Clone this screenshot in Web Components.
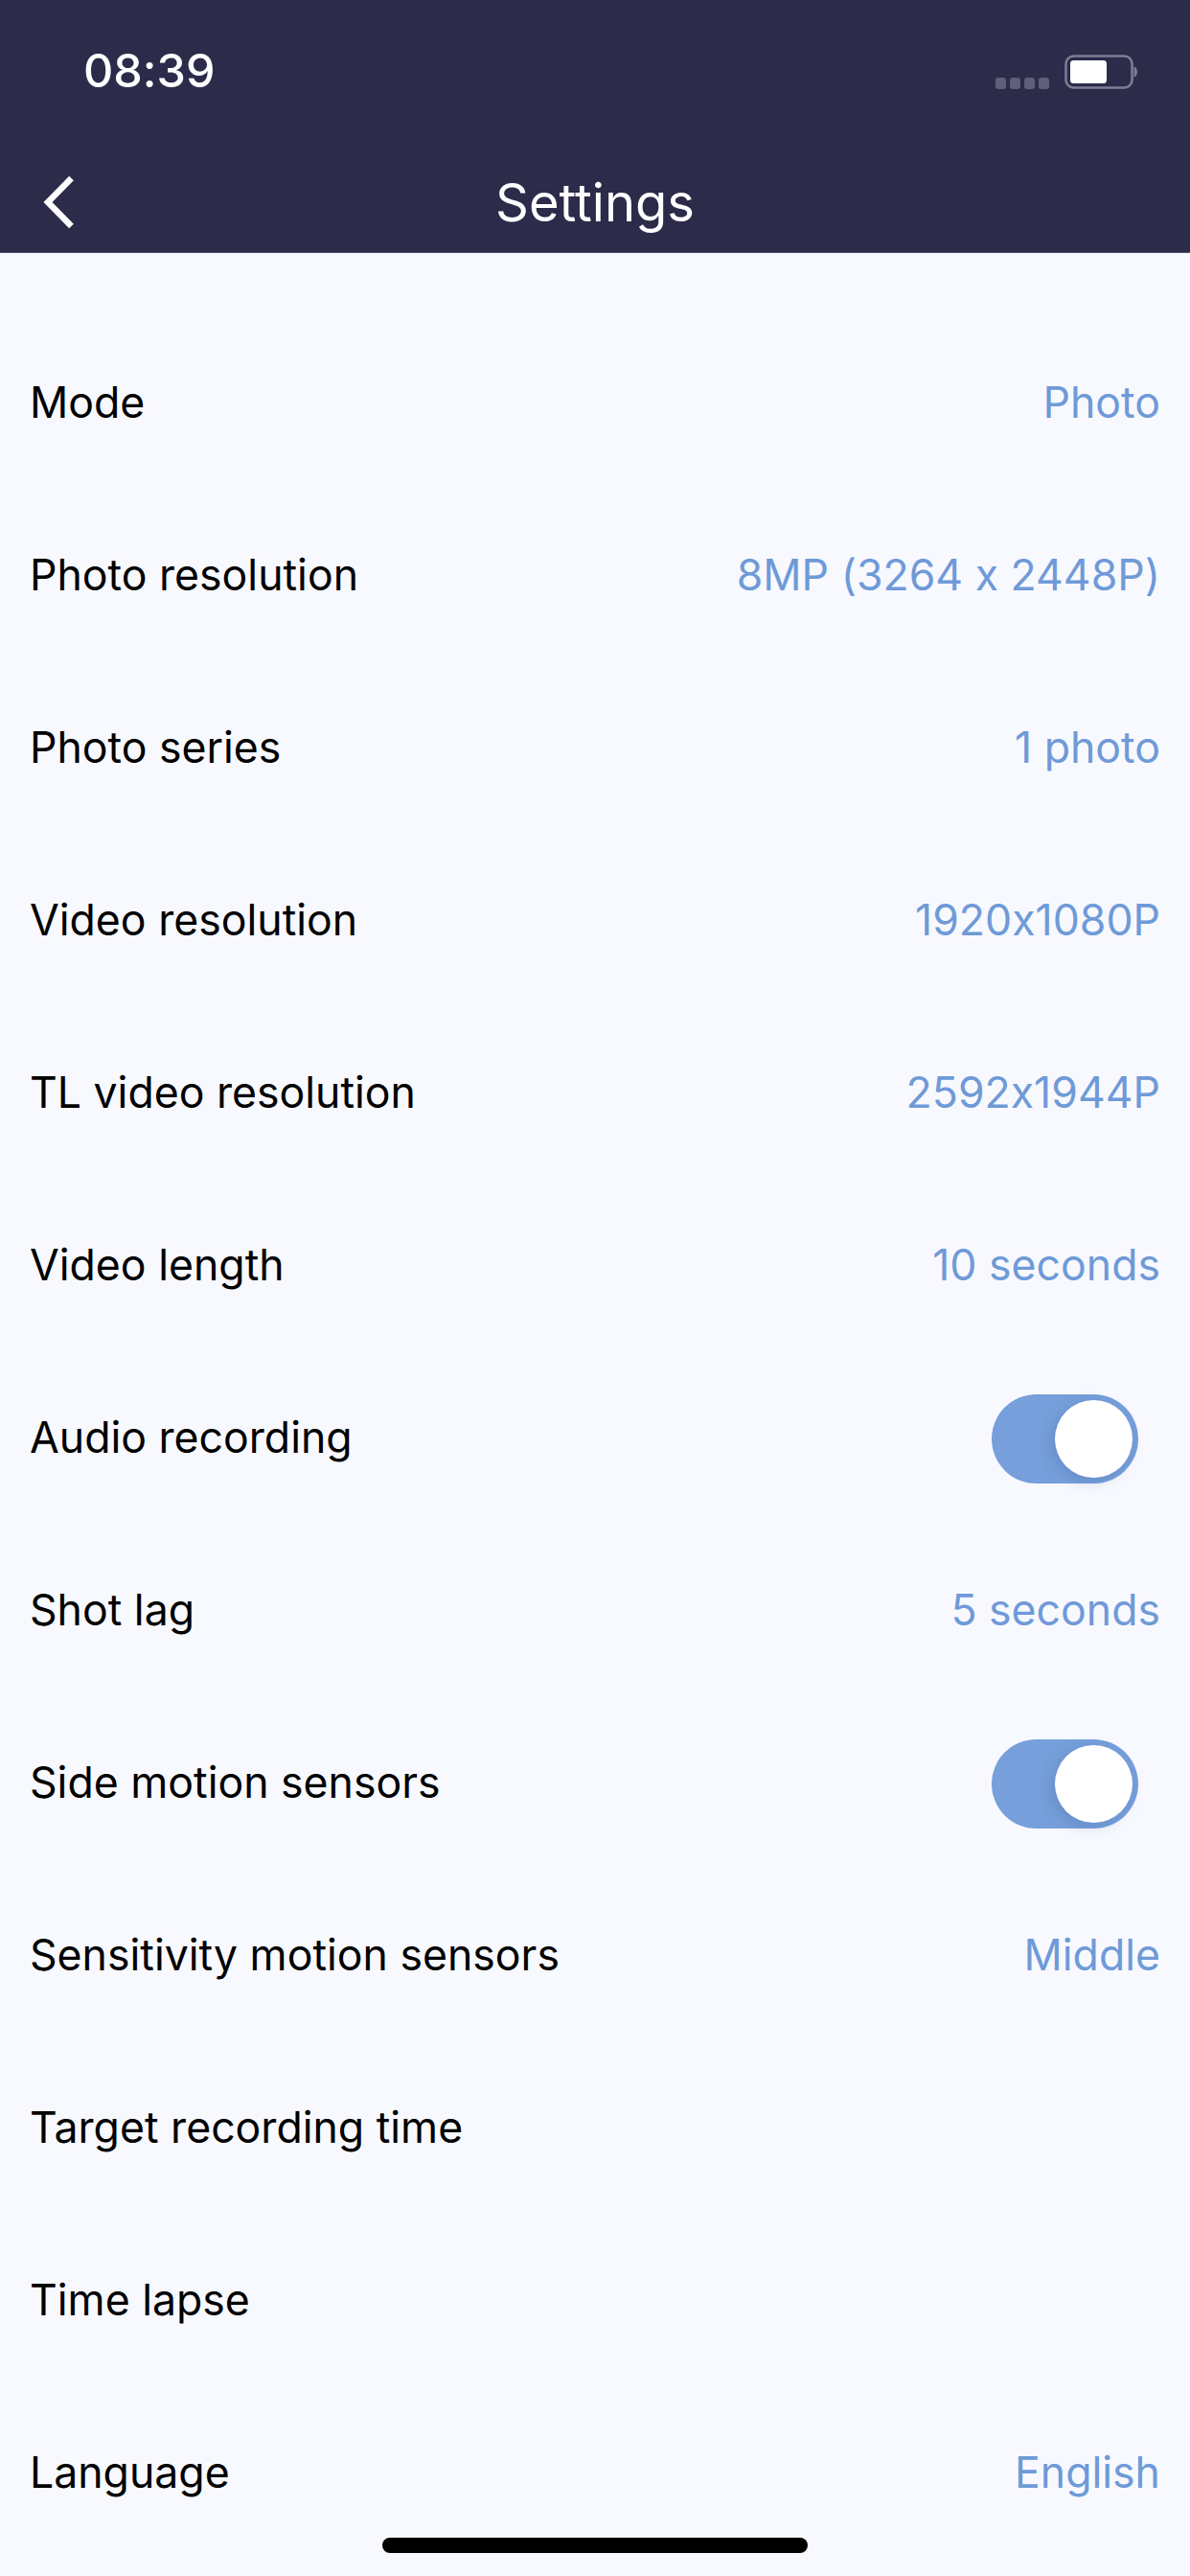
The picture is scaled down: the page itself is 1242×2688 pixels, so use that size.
<!DOCTYPE html>
<html lang="en">
<head>
<meta charset="utf-8">
<title>Settings</title>
<style>
  html, body { margin: 0; padding: 0; background: #f8f9ff; }
</style>
</head>
<body>
<settings-screen>
  <app-header slot="header" time="08:39">Settings</app-header>
  <setting-row><span slot="label">Mode</span>Photo</setting-row>
  <setting-row><span slot="label">Photo resolution</span>8MP (3264 x 2448P)</setting-row>
  <setting-row><span slot="label">Photo series</span>1 photo</setting-row>
  <setting-row><span slot="label">Video resolution</span>1920x1080P</setting-row>
  <setting-row><span slot="label">TL video resolution</span>2592x1944P</setting-row>
  <setting-row><span slot="label">Video length</span>10 seconds</setting-row>
  <setting-row><span slot="label">Audio recording</span><toggle-switch></toggle-switch></setting-row>
  <setting-row><span slot="label">Shot lag</span>5 seconds</setting-row>
  <setting-row><span slot="label">Side motion sensors</span><toggle-switch></toggle-switch></setting-row>
  <setting-row><span slot="label">Sensitivity motion sensors</span>Middle</setting-row>
  <setting-row><span slot="label">Target recording time</span></setting-row>
  <setting-row><span slot="label">Time lapse</span></setting-row>
  <setting-row><span slot="label">Language</span>English</setting-row>
</settings-screen>

<script>
class settingsScreen extends HTMLElement {
  constructor() {
    super();
    this.attachShadow({ mode: "open" });
    this.shadowRoot.innerHTML = `
      <style>
        :host {
          display: block;
          position: relative;
          width: 1242px;
          height: 2688px;
          overflow: hidden;
          background: #f8f9ff;
          font-family: Inter, "Liberation Sans", sans-serif;
          font-feature-settings: "calt" 0;
        }
        .list {
          display: flex;
          flex-direction: column;
          padding-top: 66px;
        }
        .home-bar {
          position: absolute;
          left: 399px;
          bottom: 24px;
          width: 444px;
          height: 16px;
          border-radius: 8px;
          background: #000;
        }
      </style>
      <slot name="header"></slot>
      <div class="list"><slot></slot></div>
      <div class="home-bar"></div>
    `;
  }
}

class appHeader extends HTMLElement {
  constructor() {
    super();
    this.attachShadow({ mode: "open" });
    this.shadowRoot.innerHTML = `
      <style>
        :host {
          display: block;
          height: 264px;
          box-sizing: border-box;
          background: #2c2b4a;
          border-bottom: 1px solid #4b4b69;
          color: #fff;
        }
        .status {
          height: 158px;
          box-sizing: border-box;
          padding: 49px 55px 0 87px;
          display: flex;
          justify-content: space-between;
          align-items: flex-start;
        }
        .time {
          font-size: 48.5px;
          line-height: 50px;
          font-weight: 500;
        }
        .status-icons {
          display: flex;
          align-items: flex-end;
          gap: 16px;
          margin-top: 8px;
        }
        .status-icons svg { display: block; }
        .nav {
          height: 105px;
          display: grid;
          grid-template-columns: 200px 1fr 200px;
          align-items: center;
        }
        .back { padding-left: 44px; display: flex; }
        .title {
          text-align: center;
          font-size: 54.3px;
          line-height: 60px;
        }
      </style>
      <div class="status">
        <div class="time"></div>
        <div class="status-icons">
          <svg width="56" height="12" viewBox="0 0 56 12" fill="#5f5f79">
            <rect x="0" y="0" width="11" height="12" rx="3"/>
            <rect x="15" y="0" width="11" height="12" rx="3"/>
            <rect x="30" y="0" width="11" height="12" rx="3"/>
            <rect x="45" y="0" width="11" height="12" rx="3"/>
          </svg>
          <svg width="76" height="36" viewBox="0 0 76 36">
            <rect x="1.500" y="1.500" width="69" height="33" rx="8" fill="none" stroke="#7d7d93" stroke-width="2.500"/>
            <rect x="6" y="6" width="38" height="24" rx="3.500" fill="#fff"/>
            <path d="M72.500 12 C75 13.500 76 15.500 76 18 C76 20.500 75 22.500 72.500 24 Z" fill="#7d7d93"/>
          </svg>
        </div>
      </div>
      <div class="nav">
        <div class="back">
          <svg width="36" height="56" viewBox="0 0 36 56">
            <path d="M30.500 3 L6 28 L30.500 53" fill="none" stroke="#fff" stroke-width="6.500"/>
          </svg>
        </div>
        <div class="title"><slot></slot></div>
        <div></div>
      </div>
    `;
    this.shadowRoot.querySelector(".time").textContent = this.getAttribute("time");
  }
}

class settingRow extends HTMLElement {
  constructor() {
    super();
    this.attachShadow({ mode: "open" });
    this.shadowRoot.innerHTML = `
      <style>
        :host {
          display: flex;
          height: 180px;
          align-items: center;
          justify-content: space-between;
          padding: 0 31px;
          font-size: 44.6px;
          line-height: 50px;
          color: #6f9ad8;
        }
        ::slotted([slot="label"]) { color: #000; }
      </style>
      <slot name="label"></slot>
      <div><slot></slot></div>
    `;
  }
}

class toggleSwitch extends HTMLElement {
  constructor() {
    super();
    this.attachShadow({ mode: "open" });
    this.shadowRoot.innerHTML = `
      <style>
        :host {
          display: flex;
          justify-content: flex-end;
          align-items: center;
          width: 153px;
          height: 93px;
          box-sizing: border-box;
          padding-right: 6px;
          margin: 2px 23px 0 0;
          border-radius: 47px;
          background: #769fdb;
        }
        .knob {
          width: 81px;
          height: 81px;
          border-radius: 50%;
          background: #fff;
          box-shadow: -4px 4px 14px rgba(60, 90, 150, 0.25);
        }
      </style>
      <div class="knob"></div>
    `;
  }
}

customElements.define("settings-screen", settingsScreen);
customElements.define("app-header", appHeader);
customElements.define("setting-row", settingRow);
customElements.define("toggle-switch", toggleSwitch);
</script>
</body>
</html>
